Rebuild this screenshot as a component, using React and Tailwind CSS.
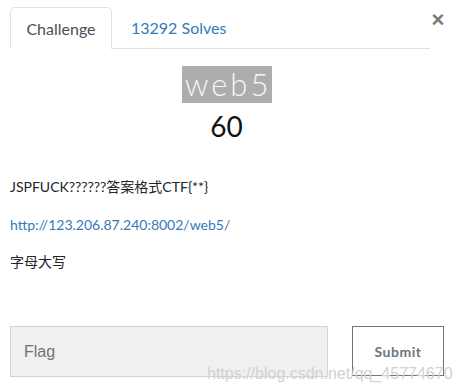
export default function App() {
  return (
    <div className="relative w-[461px] h-[391px] bg-white font-['Lato','Noto_Sans_CJK_SC',sans-serif] text-[#212529] overflow-hidden">
      {/* tabs + close */}
      <div className="flex items-start pl-[10px] pt-[7px]">
        <div className="flex w-[420px] h-[42px] border-b border-[#dee2e6]">
          <div className="w-[102px] h-[42px] flex items-center justify-center border border-b-0 border-[#dee2e6] rounded-t-[5px] bg-white text-[16px] text-[#495057]">
            Challenge
          </div>
          <div className="h-[41px] flex items-center pl-[19px] text-[16px] text-[#337ab7]">
            13292 Solves
          </div>
        </div>
        <button className="-ml-[2px] mt-[1px] w-[20px] h-[24px] flex items-center justify-center text-[22px] leading-none font-bold text-[#7a7a7a] font-['Liberation_Sans',sans-serif]">
          ×
        </button>
      </div>

      {/* title */}
      <div className="flex flex-col items-center mt-[17px] pl-[10px] pr-[18px]">
        <div className="w-[90px] h-[37px] bg-[#adadad] flex items-center justify-center text-[31px] font-light tracking-[3px] text-[#f6f6f6] leading-none pl-[3px]">
          web5
        </div>
        <div className="mt-[7px] text-[28px] leading-[32px] text-[#111]">60</div>
      </div>

      {/* description */}
      <div className="px-[10px] mt-[35px] text-[14px] leading-[20px]">
        <p>JSPFUCK??????答案格式CTF&#123;**&#125;</p>
        <p className="mt-[18px] text-[#337ab7]">http://123.206.87.240:8002/web5/</p>
        <p className="mt-[17px]">字母大写</p>
      </div>

      {/* flag form */}
      <div className="flex items-start px-[10px] mt-[54px] gap-[24px]">
        <div className="w-[318px] h-[51px] bg-[#f0f0f0] border border-[#ced4da] flex items-center pl-[13px] pt-[1px] text-[16px] text-[#6c757d] font-['Liberation_Sans',sans-serif]">
          Flag
        </div>
        <button className="w-[92px] h-[50px] pt-[1px] border border-[#6c757d] bg-white text-[14px] font-bold tracking-[0.5px] text-[#6c757d]">
          Submit
        </button>
      </div>

      {/* watermark */}
      <div className="absolute left-[207px] top-[362px] text-[16px] text-[#d2d2d2] font-['Liberation_Sans',sans-serif] pointer-events-none">
        https://blog.csdn.net/qq_45774670
      </div>
    </div>
  );
}
